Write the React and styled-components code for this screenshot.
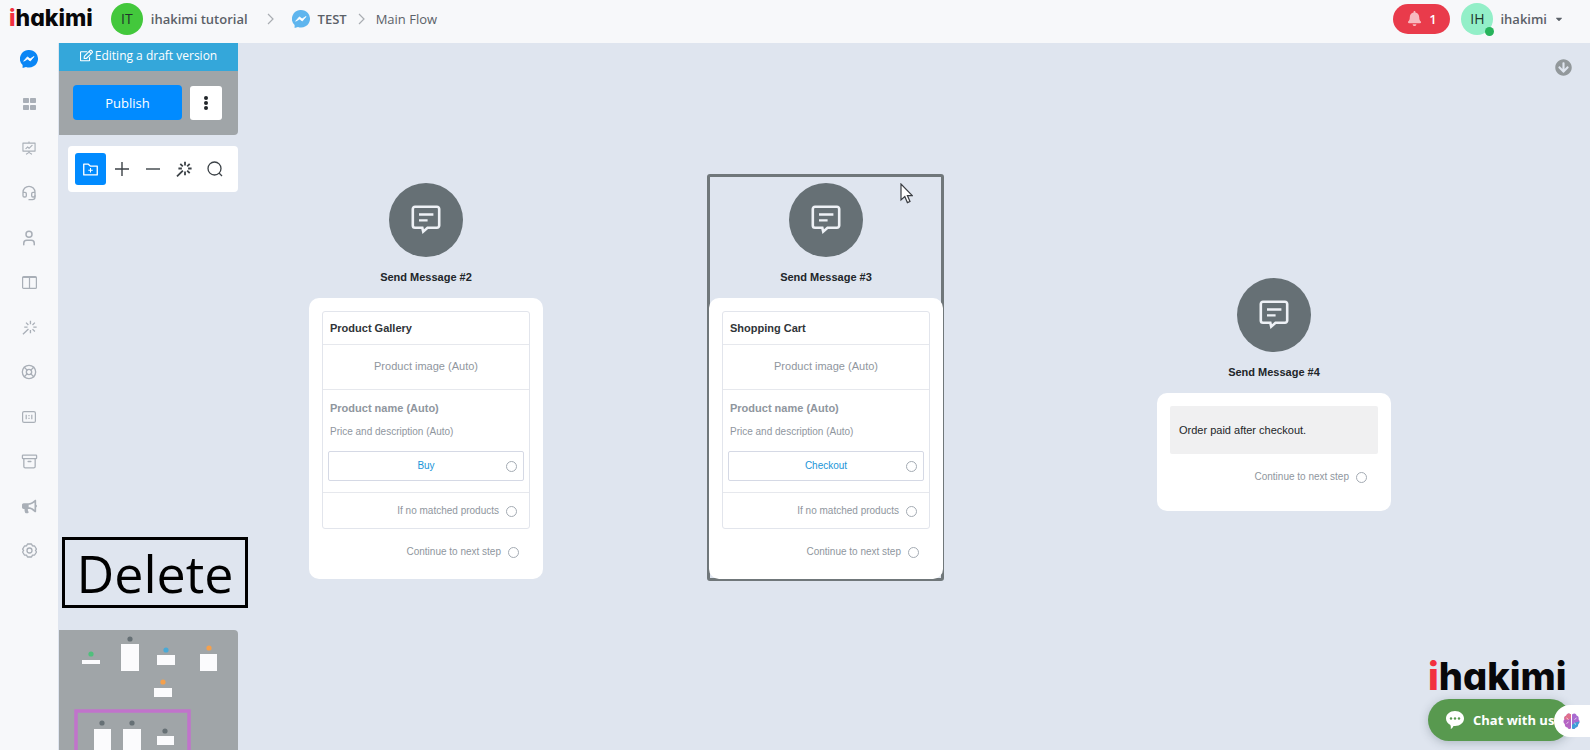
import React from 'react';
import styled, { createGlobalStyle } from 'styled-components';
import { FaArrowCircleDown, FaBell, FaBullhorn, FaCaretDown, FaRegEdit } from 'react-icons/fa';
import { AiOutlineFolderAdd, AiOutlineFundProjectionScreen } from 'react-icons/ai';
import { Archive, Headset, LifeBuoy, User } from 'lucide-react';

const GlobalStyle = createGlobalStyle`
    * { box-sizing: border-box; }
    body {
        margin: 0;
        overflow: hidden;
        font-family: 'Open Sans', 'Noto Sans', sans-serif;
        color: #5b6168;
        background: #dfe5ef;
    }
    button { font: inherit; border: none; padding: 0; cursor: pointer; }
    a { color: inherit; text-decoration: none; }
`;

const Page = styled.div`
    display: flex;
    flex-direction: column;
    height: 100vh;
`;

const Header = styled.header`
    display: flex;
    align-items: center;
    flex: 0 0 43px;
    padding: 0 26px 6px 9px;
    background: #f7f8fa;
    font-size: 13px;
    font-weight: 500;
`;

const Logo = styled.a`
    font-family: Inter, sans-serif;
    font-feature-settings: 'cv11';
    font-size: ${(p) => p.$size}px;
    font-weight: 800;
    line-height: 1;
    color: #08080a;
    span { color: #f2303f; }
`;

const Avatar = styled.span`
    position: relative;
    display: flex;
    align-items: center;
    justify-content: center;
    width: 32px;
    height: 32px;
    border-radius: 50%;
    font-size: 14px;
    font-weight: 400;
    color: #20352b;
    background: ${(p) => p.$color};
`;

const Online = styled.i`
    position: absolute;
    right: -1px;
    bottom: -1px;
    width: 9px;
    height: 9px;
    border-radius: 50%;
    background: #27b35b;
`;

const Crumbs = styled.nav`
    display: flex;
    align-items: center;
    margin-left: 18px;
    > svg:nth-of-type(1) { margin: 0 18px 0 19px; }
    > svg:nth-of-type(2) { margin: 0 11px; }
`;

const Crumb = styled.a`
    display: flex;
    align-items: center;
    gap: 8px;
    font-weight: ${(p) => p.$weight || 600};
`;

const Account = styled.div`
    display: flex;
    align-items: center;
    margin-left: auto;
    gap: 11px;
`;

const AlertButton = styled.button`
    display: flex;
    align-items: center;
    justify-content: center;
    gap: 7px;
    width: 57px;
    height: 30px;
    border-radius: 15px;
    color: #fff;
    background: #e93b4b;
    font-weight: 600;
    svg { opacity: 0.65; }
`;

const AccountMenu = styled.button`
    display: flex;
    align-items: center;
    gap: 7px;
    background: none;
    color: inherit;
    font-weight: 600;
`;

const Body = styled.div`
    display: flex;
    flex: 1;
    min-height: 0;
`;

const Sidebar = styled.nav`
    flex: 0 0 58px;
    padding-top: 6px;
    background: #f7f8fa;
`;

const SideList = styled.div`
    display: flex;
    flex-direction: column;
    align-items: center;
    justify-content: space-between;
    height: 512px;
`;

const SideLink = styled.a`
    display: flex;
    align-items: center;
    justify-content: center;
    width: 20px;
    height: 20px;
    color: #a9afb7;
`;

const Canvas = styled.main`
    position: relative;
    flex: 1;
    overflow: hidden;
    background: #dfe5ef;
`;

const Tools = styled.aside`
    position: absolute;
    top: 0;
    bottom: 0;
    left: 1px;
    display: flex;
    flex-direction: column;
    align-items: flex-start;
`;

const DraftPanel = styled.section`
    width: 179px;
    overflow: hidden;
    border-radius: 0 0 4px 0;
    background: #a0a5a8;
`;

const DraftTitle = styled.div`
    display: flex;
    align-items: center;
    justify-content: center;
    gap: 2px;
    height: 28px;
    padding-bottom: 4px;
    font-size: 12px;
    color: #fff;
    background: #34a7da;
`;

const DraftActions = styled.div`
    display: flex;
    align-items: center;
    gap: 8px;
    padding: 14px 14px 15px;
`;

const PublishButton = styled.button`
    width: 109px;
    height: 35px;
    border-radius: 4px;
    font-size: 13px;
    color: #fff;
    background: #018bff;
`;

const MoreButton = styled.button`
    width: 32px;
    height: 34px;
    border-radius: 3px;
    background: #fff;
    svg { display: block; margin: auto; }
`;

const Toolbar = styled.div`
    display: flex;
    align-items: center;
    width: 170px;
    height: 46px;
    margin: 11px 0 0 9px;
    padding: 0 7px;
    border-radius: 4px;
    background: #fff;
`;

const ToolButton = styled.button`
    display: flex;
    align-items: center;
    justify-content: center;
    width: 31px;
    height: 32px;
    border-radius: 3px;
    color: ${(p) => (p.$active ? '#fff' : '#3c4247')};
    background: ${(p) => (p.$active ? '#018bff' : 'none')};
`;

const Caption = styled.div`
    width: 186px;
    margin: auto 0 22px 3px;
    border: 3px solid #000;
    font-size: 52px;
    line-height: 65px;
    text-align: center;
    color: #000;
`;

const MiniMap = styled.svg`
    display: block;
    border-radius: 0 4px 0 0;
    background: #a0a5a8;
`;

const Node = styled.section`
    position: absolute;
    left: ${(p) => p.$x}px;
    top: ${(p) => p.$y}px;
    display: flex;
    flex-direction: column;
    align-items: center;
    width: 234px;
    padding-top: 9px;
    font-family: 'Liberation Sans', Arial, sans-serif;
    font-size: 11px;
    line-height: 14px;
    color: #8f969e;
`;

const Frame = styled.div`
    position: absolute;
    inset: 0 -1px -2px -2px;
    border: 3px solid #70777a;
    border-radius: 3px;
`;

const NodeIcon = styled.div`
    display: flex;
    align-items: center;
    justify-content: center;
    width: 74px;
    height: 74px;
    border-radius: 50%;
    background: #667075;
`;

const NodeTitle = styled.h2`
    margin: 13px 0 14px;
    font-size: 11px;
    line-height: 14px;
    color: #222629;
`;

const Card = styled.div`
    position: relative;
    width: 100%;
    padding: 13px 13px ${(p) => (p.$roomy ? 27 : 20)}px;
    border-radius: 10px;
    background: #fff;
`;

const Block = styled.div`
    border: 1px solid #e2e5ec;
    border-radius: 3px;
`;

const BlockTitle = styled.h3`
    margin: 0;
    padding: 9px 7px;
    font-size: 11px;
    line-height: 14px;
    color: #303438;
`;

const ImageSlot = styled.div`
    padding: 14px 0 16px;
    border: 1px solid #e6e8ed;
    border-width: 1px 0;
    text-align: center;
`;

const Details = styled.div`
    padding: 11px 5px 11px;
    border-bottom: 1px solid #e6e8ed;
    p { margin: 10px 2px 12px; font-size: 10px; }
    strong { display: block; margin: 0 2px; }
`;

const Port = styled.i`
    width: 11px;
    height: 11px;
    border: 1px solid #a4abb3;
    border-radius: 50%;
    background: #fff;
`;

const CardButton = styled.button`
    display: grid;
    grid-template-columns: 1fr auto 1fr;
    align-items: center;
    width: 100%;
    height: 30px;
    padding: 0 6px;
    border: 1px solid #d5d9e5;
    border-radius: 2px;
    font-size: 10px;
    color: #1b95d8;
    background: #fff;
    span { grid-column: 2; }
    i { justify-self: end; }
`;

const Step = styled.div`
    display: flex;
    align-items: center;
    justify-content: flex-end;
    gap: 7px;
    padding: ${(p) => (p.$inner ? '11px 12px 10px' : '16px 11px 0')};
    font-size: 10px;
`;

const TextBlock = styled.p`
    margin: 0;
    padding: 17px 9px;
    border-radius: 2px;
    color: #222629;
    background: #f0f0f1;
`;

const CollapseButton = styled.button`
    position: absolute;
    top: 16px;
    right: 18px;
    color: #92989b;
    background: none;
    svg { display: block; }
`;

const Cursor = styled.svg`
    position: absolute;
    left: 842px;
    top: 140px;
`;

const Corner = styled.div`
    position: absolute;
    right: 0;
    bottom: 9px;
    display: flex;
    flex-direction: column;
    width: 162px;
`;

const ChatButton = styled.button`
    display: flex;
    align-items: center;
    gap: 9px;
    width: 143px;
    height: 42px;
    margin-top: 4px;
    padding-left: 18px;
    border-radius: 21px;
    font-size: 13px;
    font-weight: 700;
    white-space: nowrap;
    color: #fff;
    background: #58994f;
    box-shadow: 0 2px 10px rgba(60, 80, 90, 0.3);
`;

const AssistTab = styled.button`
    position: absolute;
    right: 0;
    bottom: 4px;
    width: 36px;
    height: 32px;
    padding-left: 9px;
    border-radius: 16px 0 0 16px;
    background: #fff;
    svg { display: block; }
`;

const Brand = ({ size }) => (
    <Logo href="#" $size={size}><span>i</span>hakimi</Logo>
);

const Chevron = () => (
    <svg width="7" height="12" viewBox="0 0 7 12" fill="none" stroke="#a9adb2" strokeWidth="1.2">
        <path d="M1 1l5 5-5 5" />
    </svg>
);

const Messenger = ({ color, size = 18 }) => (
    <svg width={size} height={size} viewBox="0 0 18 18">
        <path d="M9 0a9 8.7 0 1 1-3 16.9L2.6 18v-3.1A8.7 8.7 0 0 1 9 0z" fill={color} />
        <path d="M3.7 11.2l3.7-4.3 2.7 2 3.9-2.4-3.7 4.5-2.7-2z" fill="#fff" stroke="#fff" strokeWidth=".8" />
    </svg>
);

const Grid = () => (
    <svg width="13" height="12" viewBox="0 0 13 12" fill="currentColor">
        <rect width="6" height="5" rx=".7" />
        <rect x="7" width="6" height="5" rx=".7" />
        <rect y="7" width="6" height="5" rx=".7" />
        <rect x="7" y="7" width="6" height="5" rx=".7" />
    </svg>
);

const Columns = () => (
    <svg width="15" height="13" viewBox="0 0 15 13" fill="none" stroke="currentColor" strokeWidth="1.2">
        <rect x=".6" y=".6" width="13.8" height="11.8" rx="1" />
        <path d="M1 1.5h13M7.5 1v11" />
    </svg>
);

// magic wand: eight rays, the lower left one is the handle
const Wand = ({ size = 16, stroke = 1.4 }) => (
    <svg width={size} height={size} viewBox="0 0 16 16" fill="none" stroke="currentColor" strokeWidth={stroke}>
        <path d="M9 .8v3.600M9 10.600v3.600M15.600 7.500h-3.500M5.900 7.500H2.400M13.700 2.800l-2.500 2.500M4.300 2.800l2.500 2.500M13.700 12.200l-2.500-2.500M6.900 9.600L1 15.300" />
    </svg>
);

const Counter = () => (
    <svg width="14" height="12" viewBox="0 0 14 12" fill="none" stroke="currentColor" strokeWidth="1.2">
        <rect x=".6" y=".6" width="12.8" height="10.8" rx="1.5" />
        <path d="M4.2 3.8v4.4M9.8 3.8v4.4M7 4v1.2M7 6.8V8" />
    </svg>
);

const HexGear = () => (
    <svg width="15" height="15" viewBox="0 0 15 15" fill="none" stroke="currentColor" strokeWidth="1.3" strokeLinejoin="round">
        <path d="M5.5 1h4l1 1.9 2.1.1 1.9 3.2-1 1.3 1 1.5-1.9 3-2.1.1-1 1.9h-4l-1-1.9-2.1-.1L.6 9l1-1.5-1-1.3L2.5 3l2-.1z" />
        <circle cx="7.5" cy="7.5" r="2.5" />
    </svg>
);

const MessageIcon = () => (
    <svg width="30" height="30" viewBox="0 0 30 30" fill="none" stroke="#eef1f6" strokeWidth="2.6">
        <path d="M4 1.800h22a2.200 2.200 0 0 1 2.200 2.200v16.600a2.200 2.200 0 0 1-2.200 2.200h-9.500L12.200 26.600l-.9-3.800H4a2.200 2.200 0 0 1-2.200-2.200V4A2.200 2.200 0 0 1 4 1.800z" />
        <path d="M8 9.500h14.400M8 15.300h8.600" strokeWidth="2.3" />
    </svg>
);

const ChatBubble = () => (
    <svg width="18" height="18" viewBox="0 0 18 18">
        <path d="M9 0c5 0 9 3.300 9 7.500S14 15 9 15c-.6 0-1 0-1.500-.1C6.800 16.500 5.900 17.400 4.800 18c.2-1.300.1-2.700-.4-4C1.700 12.700 0 10.300 0 7.500 0 3.300 4 0 9 0z" fill="#fff" />
        <circle cx="5" cy="7.5" r="1.200" fill="#58994f" />
        <circle cx="9" cy="7.5" r="1.200" fill="#58994f" />
        <circle cx="13" cy="7.5" r="1.200" fill="#58994f" />
    </svg>
);

const Brain = () => (
    <svg width="17" height="17" viewBox="0 0 17 17">
        <path d="M8 1.5C5.5-.5 3.5 1 3.5 2.6 1.5 3 1 5 1.5 6.3c-1.6 1.500-1.200 3.800.3 4.700-.2 2.500 1.500 3.500 2.700 3.400.8 1.800 2.700 1.900 3.500.8z" fill="#b565c4" />
        <path d="M8 1.5C5.500-.5 3.500 1 3.500 2.600 1.500 3 1 5 1.500 6.300L5 7l3-2z" fill="#e0708c" />
        <path d="M9 1.500c2.500-2 4.500-.5 4.500 1.100 2 .4 2.500 2.400 2 3.700 1.600 1.500 1.200 3.800-.3 4.700.2 2.500-1.500 3.500-2.700 3.400-.8 1.800-2.700 1.900-3.500.8z" fill="#a96bd0" />
        <path d="M16.200 8.500c.3 1-.2 2-1 2.500.2 2.500-1.500 3.500-2.700 3.400-.8 1.800-2.700 1.900-3.500.8V12l3-2.500z" fill="#3f9fd8" />
        <path d="M3.500 5l2 1.500M3.500 10.500l2-1.500M13.500 5l-2 1.500M13 11.500l-1.700-1.500" stroke="#fff" strokeWidth=".7" />
    </svg>
);

const sideItems = [
    { name: 'Messenger', icon: <Messenger color="#0a86f5" /> },
    { name: 'Dashboard', icon: <Grid /> },
    { name: 'Reports', icon: <AiOutlineFundProjectionScreen size={16} /> },
    { name: 'Live chat', icon: <Headset size={16} strokeWidth={2} /> },
    { name: 'Contacts', icon: <User size={18} strokeWidth={2} /> },
    { name: 'Boards', icon: <Columns /> },
    { name: 'Automation', icon: <Wand size={15} /> },
    { name: 'Help', icon: <LifeBuoy size={16} strokeWidth={2} /> },
    { name: 'Numbers', icon: <Counter /> },
    { name: 'Products', icon: <Archive size={17} strokeWidth={1.8} /> },
    { name: 'Broadcast', icon: <FaBullhorn size={15} /> },
    { name: 'Settings', icon: <HexGear /> },
];

// thumbnails on the minimap: box, then dot
const miniNodes = [
    { x: 23, y: 30, w: 18, h: 4, cx: 32, cy: 24, color: '#4fc07c' },
    { x: 62, y: 14, w: 18, h: 27, cx: 71, cy: 9, color: '#667075' },
    { x: 98, y: 25, w: 18, h: 10, cx: 107, cy: 20, color: '#4aa9d6' },
    { x: 141, y: 24, w: 17, h: 17, cx: 150, cy: 18, color: '#f5a04c' },
    { x: 95, y: 58, w: 18, h: 9, cx: 104, cy: 52, color: '#f5a04c' },
    { x: 35, y: 99, w: 17, h: 21, cx: 43, cy: 93, color: '#667075' },
    { x: 64, y: 99, w: 18, h: 21, cx: 73, cy: 93, color: '#667075' },
    { x: 98, y: 106, w: 17, h: 9, cx: 106, cy: 101, color: '#667075' },
];

const ProductBlock = ({ title, action }) => (
    <Block>
        <BlockTitle>{title}</BlockTitle>
        <ImageSlot>Product image (Auto)</ImageSlot>
        <Details>
            <strong>Product name (Auto)</strong>
            <p>Price and description (Auto)</p>
            <CardButton><span>{action}</span><Port /></CardButton>
        </Details>
        <Step $inner>If no matched products <Port /></Step>
    </Block>
);

const FlowNode = ({ x, y, title, selected, roomy, children }) => (
    <Node $x={x} $y={y}>
        {selected && <Frame />}
        <NodeIcon><MessageIcon /></NodeIcon>
        <NodeTitle>{title}</NodeTitle>
        <Card $roomy={roomy}>
            {children}
            <Step>Continue to next step <Port /></Step>
        </Card>
    </Node>
);

export default function App() {
    return (
        <Page>
            <GlobalStyle />
            <Header>
                <Brand size={23} />
                <Crumbs>
                    <Crumb href="#"><Avatar $color="#43c83c">IT</Avatar>ihakimi tutorial</Crumb>
                    <Chevron />
                    <Crumb href="#" $weight={600}><Messenger color="#5eb5ee" />TEST</Crumb>
                    <Chevron />
                    <Crumb href="#" $weight={400}>Main Flow</Crumb>
                </Crumbs>
                <Account>
                    <AlertButton aria-label="Notifications"><FaBell size={15} />1</AlertButton>
                    <AccountMenu>
                        <Avatar $color="#93efc8">IH<Online /></Avatar>
                        ihakimi
                        <FaCaretDown size={10} />
                    </AccountMenu>
                </Account>
            </Header>
            <Body>
                <Sidebar>
                    <SideList>
                        {sideItems.map((item) => (
                            <SideLink key={item.name} href="#" aria-label={item.name}>{item.icon}</SideLink>
                        ))}
                    </SideList>
                </Sidebar>
                <Canvas>
                    <FlowNode x={251} y={131} title="Send Message #2">
                        <ProductBlock title="Product Gallery" action="Buy" />
                    </FlowNode>
                    <FlowNode x={651} y={131} title="Send Message #3" selected>
                        <ProductBlock title="Shopping Cart" action="Checkout" />
                    </FlowNode>
                    <FlowNode x={1099} y={226} title="Send Message #4" roomy>
                        <TextBlock>Order paid after checkout.</TextBlock>
                    </FlowNode>

                    <Tools>
                        <DraftPanel>
                            <DraftTitle><FaRegEdit size={13} />Editing a draft version</DraftTitle>
                            <DraftActions>
                                <PublishButton>Publish</PublishButton>
                                <MoreButton aria-label="More">
                                    <svg width="4" height="14" viewBox="0 0 4 14" fill="#22262a">
                                        <circle cx="2" cy="2" r="2" />
                                        <circle cx="2" cy="7" r="2" />
                                        <circle cx="2" cy="12" r="2" />
                                    </svg>
                                </MoreButton>
                            </DraftActions>
                        </DraftPanel>
                        <Toolbar>
                            <ToolButton $active aria-label="Add folder"><AiOutlineFolderAdd size={19} /></ToolButton>
                            <ToolButton aria-label="Zoom in">
                                <svg width="14" height="14" viewBox="0 0 14 14" stroke="currentColor" strokeWidth="1.4"><path d="M0 7h14M7 0v14" /></svg>
                            </ToolButton>
                            <ToolButton aria-label="Zoom out">
                                <svg width="14" height="14" viewBox="0 0 14 14" stroke="currentColor" strokeWidth="1.4"><path d="M0 7h14" /></svg>
                            </ToolButton>
                            <ToolButton aria-label="Arrange"><Wand size={16} stroke={1.8} /></ToolButton>
                            <ToolButton aria-label="Search">
                                <svg width="16" height="16" viewBox="0 0 16 16" fill="none" stroke="currentColor" strokeWidth="1.3">
                                    <circle cx="7.5" cy="7.5" r="6.5" />
                                    <path d="M12 12l3 3" />
                                </svg>
                            </ToolButton>
                        </Toolbar>
                        <Caption>Delete</Caption>
                        <MiniMap width="179" height="120" viewBox="0 0 179 120">
                            {miniNodes.map((n) => (
                                <g key={`${n.x}-${n.y}`}>
                                    <rect x={n.x} y={n.y} width={n.w} height={n.h} fill="#fbfbfd" />
                                    <circle cx={n.cx} cy={n.cy} r="2.6" fill={n.color} />
                                </g>
                            ))}
                            <path d="M17 120V81h113v39" fill="none" stroke="#c173cb" strokeWidth="3.5" />
                        </MiniMap>
                    </Tools>

                    <CollapseButton aria-label="Collapse"><FaArrowCircleDown size={17} /></CollapseButton>
                    <Cursor width="13" height="21" viewBox="0 0 13 21">
                        <path d="M1 1v16l3.8-3.4 2.6 6 2.6-1.1-2.6-5.9h4.9z" fill="#fff" stroke="#3a3d42" strokeWidth="1.2" />
                    </Cursor>
                    <Corner>
                        <Brand size={38} />
                        <ChatButton><ChatBubble />Chat with us</ChatButton>
                        <AssistTab aria-label="Assistant"><Brain /></AssistTab>
                    </Corner>
                </Canvas>
            </Body>
        </Page>
    );
}
